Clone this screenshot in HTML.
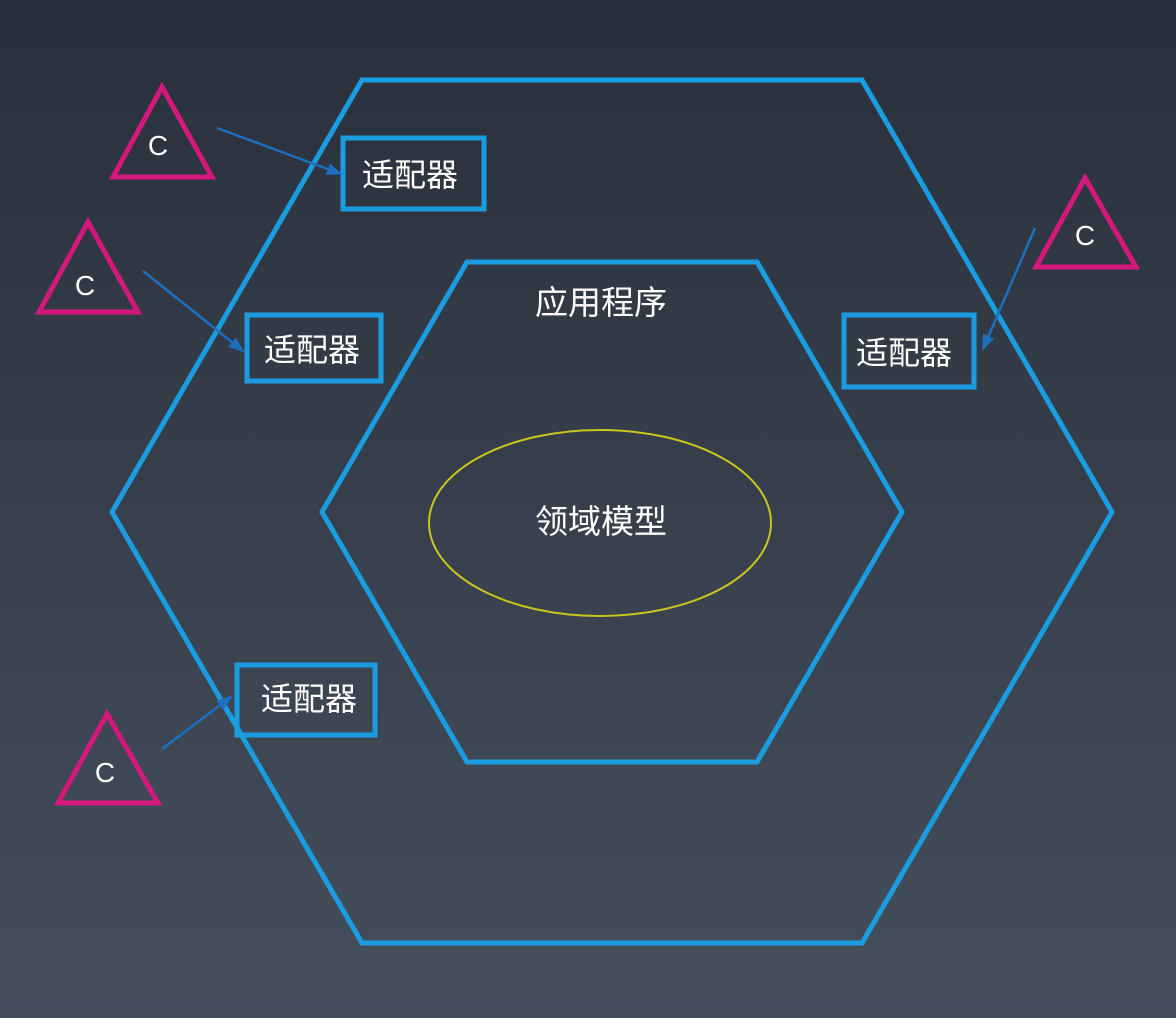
<!DOCTYPE html>
<html><head><meta charset="utf-8"><style>
html,body{margin:0;padding:0}
body{width:1176px;height:1018px;background:linear-gradient(#29303b,#454f5c);overflow:hidden}
svg{display:block}
text{font-family:"Liberation Sans","Noto Sans CJK SC",sans-serif;fill:#fff}
</style></head><body>
<svg width="1176" height="1018" viewBox="0 0 1176 1018">
<defs><marker id="a" markerWidth="16" markerHeight="12" refX="14" refY="6" orient="auto" markerUnits="userSpaceOnUse"><path d="M0,0 L16,6 L0,12 Z" fill="#1d6fbf"/></marker></defs>
<g fill="none" stroke="#1a9de0" stroke-width="5">
<polygon points="362,80 862,80 1112,512 862,943 362,943 112,512"/>
<polygon points="467,262 757,262 902,512 757,762 467,762 322,512"/>
<rect x="343" y="138" width="141" height="71"/>
<rect x="247" y="315" width="134" height="66"/>
<rect x="844" y="315" width="130" height="72"/>
<rect x="237" y="665" width="138" height="70"/>
</g>
<ellipse cx="600" cy="523" rx="171" ry="93" fill="none" stroke="#c9c61e" stroke-width="2"/>
<g fill="none" stroke="#d4187c" stroke-width="5" stroke-linejoin="miter">
<polygon points="162,87 113,177 212,177"/>
<polygon points="88,222 39,312 138,312"/>
<polygon points="1085,178 1036,267 1136,267"/>
<polygon points="107,714 58,803 158,803"/>
</g>
<g stroke="#1d6fbf" stroke-width="2.5" marker-end="url(#a)">
<line x1="217" y1="128" x2="341" y2="174"/>
<line x1="143" y1="271" x2="243" y2="351"/>
<line x1="1035" y1="228" x2="983" y2="349"/>
<line x1="162" y1="749" x2="231" y2="697"/>
</g>
<g font-size="32" text-anchor="middle">
<text x="410" y="186">适配器</text>
<text x="312" y="361">适配器</text>
<text x="904" y="364">适配器</text>
<text x="309" y="710">适配器</text>
<text x="601" y="314" font-size="33">应用程序</text>
<text x="601" y="533" font-size="33">领域模型</text>
<text x="158" y="155" font-size="28">C</text>
<text x="85" y="295" font-size="28">C</text>
<text x="1085" y="245" font-size="28">C</text>
<text x="105" y="782" font-size="28">C</text>
</g>
</svg>
</body></html>
